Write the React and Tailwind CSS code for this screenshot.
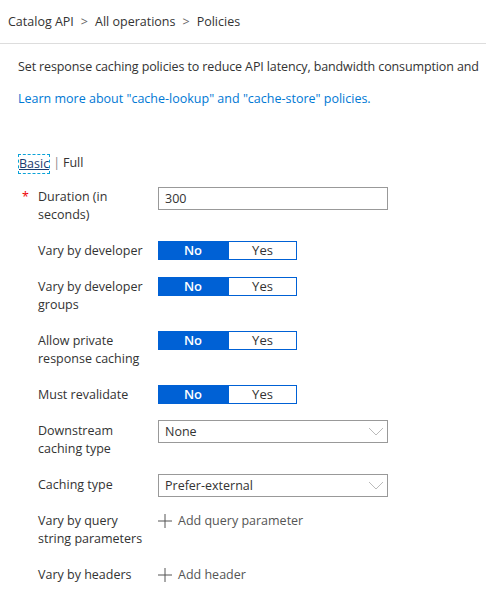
import React from "react";

const Toggle = () => (
  <div className="-mt-[1px] flex h-[19px] w-[139px] text-[13px] leading-[17px]">
    <div className="flex w-[70px] items-center justify-center bg-[#0061d5] font-semibold text-white">
      No
    </div>
    <div className="flex flex-1 items-center justify-center border border-[#0061d5] bg-white text-[#333]">
      Yes
    </div>
  </div>
);

const Chevron = () => (
  <svg width="16" height="9" viewBox="0 0 16 9" className="text-[#bbb]">
    <path d="M1 1l7 7 7-7" fill="none" stroke="currentColor" strokeWidth="1" />
  </svg>
);

const Select = ({ value }) => (
  <div className="-mt-[2px] flex h-[23px] w-[230px] items-center justify-between border border-[#999] bg-white pl-[6px] pr-[3px] text-[#333]">
    <span>{value}</span>
    <Chevron />
  </div>
);

const AddLink = ({ text }) => (
  <div className="flex items-center gap-[6px] text-[#555]">
    <svg width="14" height="14" viewBox="0 0 14 14">
      <path d="M7 0v14M0 7h14" stroke="#555" strokeWidth="1" />
    </svg>
    <span>{text}</span>
  </div>
);

// controls may be taller than one text line; keep them out of the row height
const Row = ({ label, required, children }) => (
  <div className="flex">
    <div className="w-[20px] pl-[4px] text-[#e00] leading-[18px]">{required ? "*" : ""}</div>
    <div className="w-[120px] pr-2 leading-[18px] text-[#333]">{label}</div>
    <div className="h-[18px]">{children}</div>
  </div>
);

export default function App() {
  return (
    <div className="min-h-screen overflow-hidden bg-white font-['Open_Sans',sans-serif] text-[12.5px] leading-[18px] text-[#333]">
      <div className="flex h-[44px] items-center border-b border-[#ddd] px-2">
        Catalog API <span className="mx-[7px] text-[#666]">&gt;</span> All operations{" "}
        <span className="mx-[7px] text-[#666]">&gt;</span> Policies
      </div>

      <div className="px-[18px]">
        <p className="mt-[14px] whitespace-nowrap tracking-[-0.12px]">
          Set response caching policies to reduce API latency, bandwidth consumption and
        </p>
        <p className="mt-[14px] text-[#0078d4]">
          Learn more about "cache-lookup" and "cache-store" policies.
        </p>

        <div className="mt-[46px] flex">
          <span className="border border-dashed border-[#0aa2d8] text-[#1a3c6e] underline">Basic</span>
          <span className="mx-[3px] text-[#888]">|</span>
          <span>Full</span>
        </div>

        <div className="mt-[14px] flex flex-col gap-[18px]">
          <Row label="Duration (in seconds)" required>
            <div className="-mt-[1px] flex h-[23px] w-[230px] items-center border border-[#999] px-[6px]">300</div>
          </Row>
          <Row label="Vary by developer">
            <Toggle />
          </Row>
          <Row label="Vary by developer groups">
            <Toggle />
          </Row>
          <Row label="Allow private response caching">
            <Toggle />
          </Row>
          <Row label="Must revalidate">
            <Toggle />
          </Row>
          <Row label="Downstream caching type">
            <Select value="None" />
          </Row>
          <Row label="Caching type">
            <Select value="Prefer-external" />
          </Row>
          <Row label="Vary by query string parameters">
            <AddLink text="Add query parameter" />
          </Row>
          <Row label="Vary by headers">
            <AddLink text="Add header" />
          </Row>
        </div>
      </div>
    </div>
  );
}
